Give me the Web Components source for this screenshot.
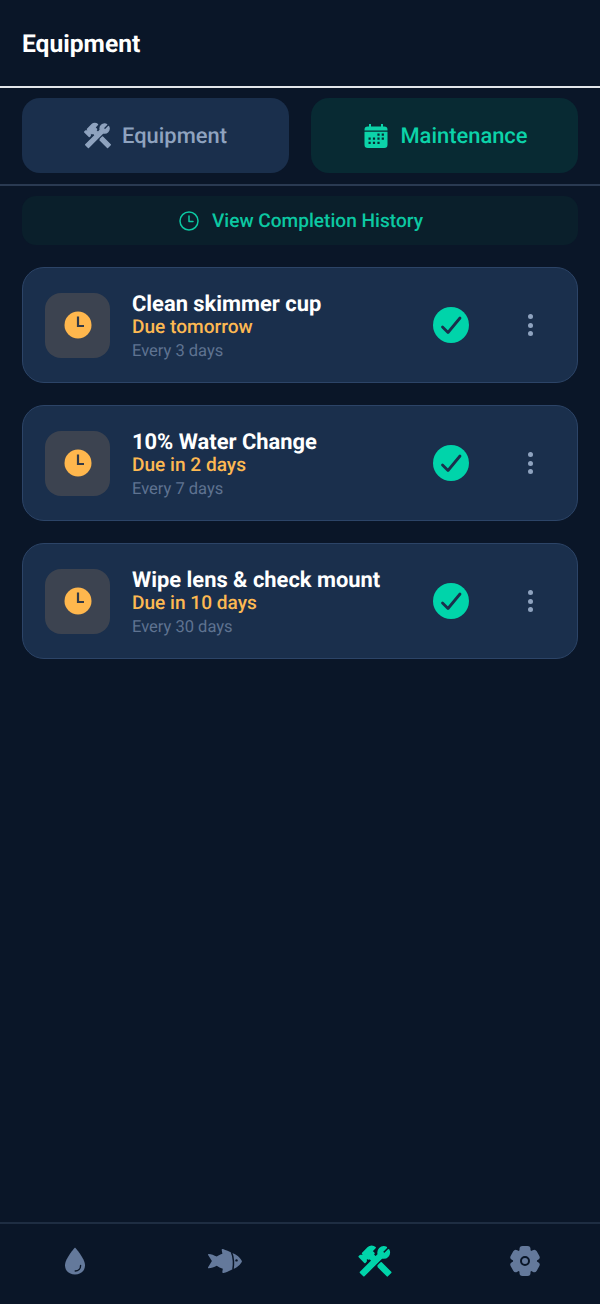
<!DOCTYPE html>
<html>
<head>
<meta charset="utf-8">
<title>Equipment</title>
<style>
html,body{margin:0;height:100%;background:#0a1628;}
body{font-family:Roboto,"Noto Sans",sans-serif;text-rendering:geometricPrecision;}
</style>
</head>
<body>
<app-shell>
    <app-header>Equipment</app-header>
    <tab-row>
        <tab-button icon="tools">Equipment</tab-button>
        <tab-button icon="calendar" active>Maintenance</tab-button>
    </tab-row>
    <history-button>View Completion History</history-button>
    <task-list>
        <task-card name="Clean skimmer cup" due="Due tomorrow" every="Every 3 days"></task-card>
        <task-card name="10% Water Change" due="Due in 2 days" every="Every 7 days"></task-card>
        <task-card name="Wipe lens &amp; check mount" due="Due in 10 days" every="Every 30 days"></task-card>
    </task-list>
    <bottom-nav slot="nav">
        <nav-item icon="drop"></nav-item>
        <nav-item icon="fish"></nav-item>
        <nav-item icon="tools" active></nav-item>
        <nav-item icon="gear"></nav-item>
    </bottom-nav>
</app-shell>

<script>
//================================= icons ======================================
const HAMMER = "M13.78 15.3L19.78 21.3L21.89 19.14L15.89 13.14L13.78 15.3M17.5 10.1C17.11 10.1 16.69 10.05 16.36 9.91L4.97 21.25L2.86 19.14L10.27 11.74L8.5 9.96L7.78 10.66L6.33 9.25V12.11L5.63 12.81L2.11 9.25L2.81 8.55H5.62L4.22 7.14L7.78 3.58C8.95 2.41 10.83 2.41 12 3.58L9.89 5.74L11.3 7.14L10.59 7.85L12.38 9.63L14.2 7.75C14.06 7.42 14 7 14 6.63C14 4.66 15.55 3.11 17.5 3.11C18.09 3.11 18.61 3.25 19.08 3.53L16.41 6.2L17.91 7.7L20.58 5.03C20.86 5.5 21 6 21 6.63C21 8.55 19.45 10.1 17.5 10.1Z";

const ICONS = {
    tools: (s) => `<svg width="${s}" height="${s}" viewBox="0 0 24 24" fill="currentColor" stroke="currentColor" stroke-width="1.100" stroke-linejoin="round"><path d="${HAMMER}"/></svg>`,
    calendar: () => `<svg width="26" height="26" viewBox="0 0 26 26" fill="currentColor">
        <path d="M6 1h2v2.400h10V1h2v2.400h1.200A3.300 3.300 0 0 1 24.500 6.700V7.600H1.500V6.700A3.300 3.300 0 0 1 4.800 3.400H6z"/>
        <path fill-rule="evenodd" d="M1.500 8.800h23v12.900a3.300 3.300 0 0 1-3.300 3.300H4.800a3.300 3.300 0 0 1-3.300-3.300z
        M14.400 10.500h2.200v2.200h-2.200z M18.700 10.500h2.200v2.200h-2.200z
        M5.500 14.500h2.200v2.200h-2.200z M9.900 14.500h2.200v2.200h-2.200z M14.400 14.500h2.200v2.200h-2.200z M18.700 14.500h2.200v2.200h-2.200z
        M5.500 18.700h2.200v2.200h-2.200z M9.900 18.700h2.200v2.200h-2.200z M14.400 18.700h2.200v2.200h-2.200z"/>
    </svg>`,
    drop: () => `<svg width="22" height="30" viewBox="0 0 22 30">
        <path fill="currentColor" d="M11 1.500C11 1.500 1 12.500 1 19.200C1 25 5.500 28.500 11 28.500C16.500 28.500 21 25 21 19.200C21 12.500 11 1.500 11 1.500Z"/>
        <path fill="none" stroke="#0a1628" stroke-width="1.400" stroke-linecap="round" d="M16.600 19.500C16.600 22.800 14.300 25 11.200 25"/>
    </svg>`,
    fish: () => `<svg width="36" height="26" viewBox="0 0 36 26">
        <g transform="translate(1 1)">
        <path fill="currentColor" d="M0.800 4.900C3 5 6.300 6.200 8.700 7.500C10.300 6.400 12.500 5.300 14.400 4.800L13.700 1C13.500 0.200 14.200 -0.200 15 0.100C18 1.200 21.200 2.600 23.700 4C28.500 5.200 32.500 8.800 34 12.300C32.800 15.400 29.300 18.700 25 20C22.500 21.500 19 23.100 15.500 24C14.700 24.200 14.100 23.700 14.300 22.900L14.800 19.700C12.500 19 10.500 18 8.700 16.700C6.300 18.100 3 19.200 0.800 19.300C0.100 19.300 -0.200 18.800 0.100 18.200L3.900 12L0.100 6C-0.200 5.400 0.100 4.900 0.800 4.900Z"/>
        <path fill="none" stroke="#0a1628" stroke-width="1.500" stroke-linecap="round" d="M23.700 4C25.800 8 25.800 16 25 20"/>
        <circle cx="28.500" cy="11.400" r="1.200" fill="#0a1628"/>
        </g>
    </svg>`,
    gear: () => `<svg width="32" height="32" viewBox="0 0 32 32">
        <g fill="currentColor">
            <circle cx="16" cy="16" r="12"/>
            ${[0,60,120].map(a => `<rect x="10.500" y="1" width="11" height="30" rx="3" transform="rotate(${a} 16 16)"/>`).join("")}
        </g>
        <circle cx="16" cy="16" r="4" fill="none" stroke="#0a1628" stroke-width="2"/>
    </svg>`
};

//================================= layout =====================================
class AppShell extends HTMLElement{
    constructor() {
        super();
        this.attachShadow({mode:"open"});
        this.shadowRoot.innerHTML=`
        <style>
        :host{display:flex;flex-direction:column;height:1304px;background:#0a1628;}
        main{flex:1;display:flex;flex-direction:column;}
        </style>
        <main><slot></slot></main>
        <slot name="nav"></slot>`;
    }
}
customElements.define("app-shell",AppShell);

class AppHeader extends HTMLElement{
    constructor() {
        super();
        this.attachShadow({mode:"open"});
        this.shadowRoot.innerHTML=`
        <style>
        :host{display:flex;align-items:center;box-sizing:border-box;height:88px;padding:2px 22px 0;
            border-bottom:2px solid #e2e6ea;font-size:24.6px;font-weight:700;color:#fff;}
        </style>
        <slot></slot>`;
    }
}
customElements.define("app-header",AppHeader);

class TabRow extends HTMLElement{
    constructor() {
        super();
        this.attachShadow({mode:"open"});
        this.shadowRoot.innerHTML=`
        <style>
        :host{display:grid;grid-template-columns:1fr 1fr;gap:22px;padding:10px 22px 11px;
            border-bottom:2px solid #2a3a52;}
        </style>
        <slot></slot>`;
    }
}
customElements.define("tab-row",TabRow);

class TabButton extends HTMLElement{
    constructor() {
        super();
        this.attachShadow({mode:"open"});
        let active = this.hasAttribute("active");
        let name = this.getAttribute("icon");
        this.shadowRoot.innerHTML=`
        <style>
        :host{display:flex;justify-content:center;align-items:center;gap:${active?11:9}px;height:75px;border-radius:18px;
            padding:${active?"0 0 0 2px":"0 2px 0 0"};
            font-size:21.9px;font-weight:500;
            background:${active?"#082a33":"#1a2f4c"};color:${active?"#0cd3a9":"#8fa3bf"};}
        svg{display:block;}
        span{padding-top:2px;}
        </style>
        ${name==="tools"?ICONS.tools(31):ICONS[name]()}<span><slot></slot></span>`;
    }
}
customElements.define("tab-button",TabButton);

class HistoryButton extends HTMLElement{
    constructor() {
        super();
        this.attachShadow({mode:"open"});
        this.shadowRoot.innerHTML=`
        <style>
        :host{display:flex;justify-content:center;align-items:center;gap:13px;height:49px;margin:10px 22px 0;
            padding-left:2px;border-radius:14px;background:#0a1f2b;color:#0cc8a2;font-size:19.1px;font-weight:500;}
        svg{display:block;}
        </style>
        <svg width="20" height="20" viewBox="0 0 20 20" fill="none" stroke="currentColor" stroke-width="1.500" stroke-linecap="round" stroke-linejoin="round">
            <circle cx="10" cy="10" r="9"/><path d="M10 5V10.500H14"/>
        </svg>
        <span><slot></slot></span>`;
    }
}
customElements.define("history-button",HistoryButton);

class TaskList extends HTMLElement{
    constructor() {
        super();
        this.attachShadow({mode:"open"});
        this.shadowRoot.innerHTML=`
        <style>
        :host{display:flex;flex-direction:column;gap:22px;padding:22px 22px 0;}
        </style>
        <slot></slot>`;
    }
}
customElements.define("task-list",TaskList);

const cardTemplate = document.createElement("template");
cardTemplate.innerHTML=`
    <style>
    :host{display:flex;align-items:center;box-sizing:border-box;height:116px;padding:0 22px;
        background:#1a2f4c;border:1px solid #2c4467;border-radius:22px;}
    .badge{width:65px;height:65px;flex:none;border-radius:16px;background:#3c4350;
        display:flex;justify-content:center;align-items:center;margin-right:22px;}
    .text{flex:1;min-width:0;display:flex;flex-direction:column;padding-top:9px;}
    .name{font-size:21.9px;line-height:22px;font-weight:700;color:#fff;}
    .due{font-size:19.1px;line-height:20px;margin-top:1px;font-weight:500;color:#fdb952;}
    .every{font-size:16.5px;line-height:29px;color:#5f7391;}
    .done{width:36px;height:36px;flex:none;border-radius:50%;background:#00d4aa;
        display:flex;justify-content:center;align-items:center;margin-right:59px;}
    .more{width:5px;flex:none;display:flex;flex-direction:column;gap:3.600px;margin-right:22px;}
    .more i{display:block;width:5px;height:5px;border-radius:50%;background:#8fa3bf;}
    svg{display:block;}
    </style>
    <div class="badge">
        <svg width="28" height="28" viewBox="0 0 28 28">
            <circle cx="14" cy="14" r="13.500" fill="#ffb74d"/>
            <path d="M14 5.500V15H20" fill="none" stroke="#333a47" stroke-width="2.200"/>
        </svg>
    </div>
    <div class="text">
        <div class="name"></div>
        <div class="due"></div>
        <div class="every"></div>
    </div>
    <div class="done">
        <svg width="24" height="24" viewBox="0 0 24 24" fill="none" stroke="#1a2f4c" stroke-width="2.800" stroke-linecap="round" stroke-linejoin="round">
            <path d="M3.500 14L9 19.500L21 5"/>
        </svg>
    </div>
    <div class="more"><i></i><i></i><i></i></div>
`;

class TaskCard extends HTMLElement{
    constructor() {
        super();
        this.attachShadow({mode:"open"});
        this.shadowRoot.appendChild(cardTemplate.content.cloneNode(true));
        this.shadowRoot.querySelector(".name").textContent = this.getAttribute("name");
        this.shadowRoot.querySelector(".due").textContent = this.getAttribute("due");
        this.shadowRoot.querySelector(".every").textContent = this.getAttribute("every");
    }
}
customElements.define("task-card",TaskCard);

class BottomNav extends HTMLElement{
    constructor() {
        super();
        this.attachShadow({mode:"open"});
        this.shadowRoot.innerHTML=`
        <style>
        :host{display:grid;grid-template-columns:repeat(4,1fr);box-sizing:border-box;height:82px;
            padding-bottom:7px;border-top:2px solid #1e2d42;align-items:center;background:#0a1628;}
        </style>
        <slot></slot>`;
    }
}
customElements.define("bottom-nav",BottomNav);

class NavItem extends HTMLElement{
    constructor() {
        super();
        this.attachShadow({mode:"open"});
        let name = this.getAttribute("icon");
        this.shadowRoot.innerHTML=`
        <style>
        :host{display:flex;justify-content:center;align-items:center;
            color:${this.hasAttribute("active")?"#00d4aa":"#64799b"};}
        svg{display:block;}
        </style>
        ${name==="tools"?ICONS.tools(38):ICONS[name]()}`;
    }
}
customElements.define("nav-item",NavItem);
</script>
</body>
</html>
